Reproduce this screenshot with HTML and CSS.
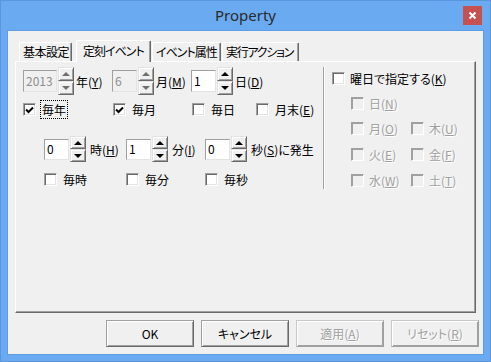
FILE: index.html
```html
<!DOCTYPE html>
<html lang="ja">
<head>
    <meta charset="UTF-8">
    <title>Property</title>
    <link rel="stylesheet" href="styles.css">
</head>
<body>
<div class="window">
    <div class="titlebar">
        <span></span>
        <span class="title">Property</span>
        <div class="close-btn">
            <svg width="19" height="19" viewBox="0 0 19 19"><path d="M6.5 6.5 L12.5 12.5 M12.5 6.5 L6.5 12.5" stroke="#fff" stroke-width="2"/></svg>
        </div>
    </div>

    <div class="client">
        <div class="tabs">
            <div class="tab t1">基本設定</div>
            <div class="tab t2 active">定刻イベント</div>
            <div class="tab t3">イベント属性</div>
            <div class="tab t4">実行アクション</div>
        </div>

        <div class="panel">
            <div class="left">
                <!-- 年 月 日 -->
                <div class="row row-date">
                    <div class="field f-year">
                        <div class="edit wide disabled">2013</div>
                        <div class="spin disabled"><span class="up"></span><span class="down"></span></div>
                        <span class="lbl">年(<u>Y</u>)</span>
                    </div>
                    <div class="field f-month">
                        <div class="edit disabled">6</div>
                        <div class="spin disabled"><span class="up"></span><span class="down"></span></div>
                        <span class="lbl">月(<u>M</u>)</span>
                    </div>
                    <div class="field">
                        <div class="edit">1</div>
                        <div class="spin"><span class="up"></span><span class="down"></span></div>
                        <span class="lbl">日(<u>D</u>)</span>
                    </div>
                </div>

                <div class="row row-check">
                    <label class="check c90"><span class="box checked"></span><span class="text focus">毎年</span></label>
                    <label class="check c79"><span class="box checked"></span><span class="text">毎月</span></label>
                    <label class="check c64"><span class="box"></span><span class="text">毎日</span></label>
                    <label class="check"><span class="box"></span><span class="text">月末(<u>E</u>)</span></label>
                </div>

                <!-- 時 分 秒 -->
                <div class="row row-time">
                    <div class="field f-hour">
                        <div class="edit">0</div>
                        <div class="spin"><span class="up"></span><span class="down"></span></div>
                        <span class="lbl">時(<u>H</u>)</span>
                    </div>
                    <div class="field f-min">
                        <div class="edit">1</div>
                        <div class="spin"><span class="up"></span><span class="down"></span></div>
                        <span class="lbl">分(<u>I</u>)</span>
                    </div>
                    <div class="field">
                        <div class="edit">0</div>
                        <div class="spin"><span class="up"></span><span class="down"></span></div>
                        <span class="lbl">秒(<u>S</u>)に発生</span>
                    </div>
                </div>

                <div class="row row-check2">
                    <label class="check c82"><span class="box"></span><span class="text">毎時</span></label>
                    <label class="check c79"><span class="box"></span><span class="text">毎分</span></label>
                    <label class="check"><span class="box"></span><span class="text">毎秒</span></label>
                </div>
            </div>

            <div class="separator"></div>

            <div class="right">
                <label class="check"><span class="box"></span><span class="text wd">曜日で指定する(<u>K</u>)</span></label>
                <div class="wd-row">
                    <label class="check dis c60"><span class="box"></span><span class="text">日(<u>N</u>)</span></label>
                </div>
                <div class="wd-row">
                    <label class="check dis c60"><span class="box"></span><span class="text">月(<u>O</u>)</span></label>
                    <label class="check dis"><span class="box"></span><span class="text">木(<u>U</u>)</span></label>
                </div>
                <div class="wd-row r3">
                    <label class="check dis c60"><span class="box"></span><span class="text">火(<u>E</u>)</span></label>
                    <label class="check dis"><span class="box"></span><span class="text">金(<u>F</u>)</span></label>
                </div>
                <div class="wd-row r3">
                    <label class="check dis c60"><span class="box"></span><span class="text">水(<u>W</u>)</span></label>
                    <label class="check dis"><span class="box"></span><span class="text">土(<u>T</u>)</span></label>
                </div>
            </div>
        </div>

        <div class="buttons">
            <button class="btn">OK</button>
            <button class="btn">キャンセル</button>
            <button class="btn" disabled>適用(<u>A</u>)</button>
            <button class="btn" disabled>リセット(<u>R</u>)</button>
        </div>
    </div>
</div>
</body>
</html>
```

FILE: styles.css
```css
body {
    margin: 0;
    font-family: "Noto Sans CJK JP", sans-serif;
    font-size: 12px;
    font-feature-settings: "palt";
    color: #000;
}
.window {
    width: 491px;
    height: 362px;
    box-sizing: border-box;
    background-color: #6aaaf1;
    border: 1px solid #5a96dc;
    display: flex;
    flex-direction: column;
}

/* タイトルバー */
.titlebar {
    height: 29px;
    display: grid;
    grid-template-columns: 1fr auto 1fr;
}
.title {
    font-family: "Noto Sans", sans-serif;
    font-size: 15px;
    line-height: 29px;
    color: #2b2b2b;
}
.close-btn {
    justify-self: end;
    width: 19px;
    height: 19px;
    margin: 5px 8px 0 0;
    background-color: #c75050;
}
.close-btn svg {
    display: block;
}

.client {
    flex: 1;
    margin: 0 6px 6px;
    border: 1px solid #5e9de6;
    background-color: #f0f0f0;
    display: flex;
    flex-direction: column;
}

/* タブ */
.tabs {
    display: flex;
    align-items: flex-end;
    height: 21px;
    margin-top: 9px;
    padding-left: 11px;
}
.tab {
    box-sizing: border-box;
    height: 19px;
    line-height: 17px;
    padding-left: 3px;
    letter-spacing: -1px;
    background-color: #f0f0f0;
    border-top: 1px solid #fff;
    border-left: 1px solid #fff;
    border-right: 1px solid #696969;
    border-radius: 2px 2px 0 0;
    box-shadow: inset -1px 0 #a0a0a0;
    white-space: nowrap;
}
.tab.active {
    position: relative;
    z-index: 1;
    height: 22px;
    margin-bottom: -1px;
    line-height: 19px;
    padding-left: 6px;
}
.t1 { width: 53px; letter-spacing: -0.5px; }
.t2 { width: 75px; margin-left: 4px; }
.t3 { width: 69px; margin-left: 1px; }
.t4 { width: 77px; margin-left: 1px; letter-spacing: -1.3px; }

.panel {
    box-sizing: border-box;
    width: 461px;
    height: 252px;
    margin-left: 7px;
    border: 1px solid;
    border-color: #fff #696969 #696969 #fff;
    box-shadow: inset -1px -1px #a0a0a0;
    display: flex;
    align-items: flex-start;
}

.left {
    box-sizing: border-box;
    width: 307px;
    padding-left: 7px;
}
.row {
    display: flex;
    align-items: center;
}
.row-date {
    height: 28px;
    margin-top: 5px;
}
.row-check {
    height: 13px;
    margin-top: 8px;
}
.row-time {
    height: 26px;
    margin-top: 20px;
    padding-left: 21px;
}
.row-check2 {
    height: 13px;
    margin-top: 11px;
    padding-left: 21px;
}

/* スピンボックス */
.field {
    display: flex;
    align-items: center;
    white-space: nowrap;
}
.f-year { width: 89px; }
.f-month { width: 79px; }
.f-hour { width: 82px; }
.f-min { width: 79px; }

.edit {
    box-sizing: border-box;
    width: 25px;
    height: 22px;
    padding-left: 2px;
    line-height: 19px;
    background-color: #fff;
    border: 1px solid;
    border-color: #a0a0a0 #e3e3e3 #e3e3e3 #a0a0a0;
}
.row-time .edit {
    height: 21px;
    line-height: 18px;
}
.edit.wide {
    width: 34px;
}
.edit.disabled {
    background-color: #f0f0f0;
    color: #8d8d8d;
}
.spin {
    display: flex;
    flex-direction: column;
    width: 16px;
    height: 28px;
    margin-left: 1px;
}
.row-time .spin {
    height: 26px;
}
.spin span {
    flex: 1;
    box-sizing: border-box;
    display: flex;
    align-items: center;
    justify-content: center;
    background-color: #f0f0f0;
    border: 1px solid;
    border-color: #e3e3e3 #696969 #696969 #e3e3e3;
    box-shadow: inset 1px 1px #fff, inset -1px -1px #a0a0a0;
}
.spin .up::after,
.spin .down::after {
    content: "";
    border-left: 4px solid transparent;
    border-right: 4px solid transparent;
}
.spin .up::after {
    border-bottom: 4px solid #000;
}
.spin .down::after {
    border-top: 4px solid #000;
}
.spin.disabled .up::after {
    border-bottom-color: #707070;
}
.spin.disabled .down::after {
    border-top-color: #707070;
}
.lbl {
    margin-left: 2px;
}
.row-time .lbl {
    margin-left: 4px;
}

/* チェックボックス */
.check {
    display: flex;
    align-items: center;
    height: 13px;
    white-space: nowrap;
}
.c90 { width: 90px; }
.c82 { width: 82px; }
.c79 { width: 79px; }
.c64 { width: 64px; }
.c60 { width: 60px; }
.box {
    box-sizing: border-box;
    flex: none;
    width: 13px;
    height: 13px;
    background-color: #fff;
    border: 1px solid;
    border-color: #a0a0a0 #fff #fff #a0a0a0;
    box-shadow: inset 1px 1px #696969, inset -1px -1px #e3e3e3;
}
.box.checked {
    background: #fff url("data:image/svg+xml,%3Csvg xmlns='http://www.w3.org/2000/svg' width='11' height='11'%3E%3Cpath d='M2 5.5 L4.5 8 L9 3.5' fill='none' stroke='%23000' stroke-width='2'/%3E%3C/svg%3E") no-repeat center;
}
.check .text {
    margin-left: 6px;
    line-height: 17px;
}
.check .text.focus {
    margin-left: 4px;
    padding: 0 1px;
    border: 1px dotted #000;
}
.check .text.wd {
    margin-left: 5px;
}

.separator {
    width: 1px;
    height: 122px;
    margin-top: 5px;
    border-left: 1px solid #a0a0a0;
    background-color: #fff;
}

.right {
    margin-left: 7px;
    padding-top: 10px;
}
.wd-row {
    display: flex;
    margin-top: 12px;
    padding-left: 19px;
}
.wd-row.r3 {
    margin-top: 13px;
}
.check.dis .box {
    background-color: #f0f0f0;
    box-shadow: inset 1px 1px #a0a0a0;
}
.check.dis .text {
    margin-left: 5px;
    color: #a0a0a0;
    text-shadow: 1px 1px 0 #fff;
}

/* ボタン */
.buttons {
    display: flex;
    justify-content: flex-end;
    gap: 7px;
    margin-top: 7px;
    padding-right: 4px;
}
.btn {
    box-sizing: border-box;
    width: 88px;
    height: 27px;
    padding: 0;
    font-family: inherit;
    font-size: 12px;
    font-feature-settings: "palt";
    color: #000;
    background-color: #f0f0f0;
    border: 1px solid;
    border-color: #a0a0a0 #696969 #696969 #a0a0a0;
    box-shadow: inset 1px 1px #fff, inset -1px -1px #a0a0a0;
}
.btn:disabled {
    color: #a0a0a0;
    text-shadow: 1px 1px 0 #fff;
    border-color: #c8c8c8 #a0a0a0 #a0a0a0 #c8c8c8;
}
```
